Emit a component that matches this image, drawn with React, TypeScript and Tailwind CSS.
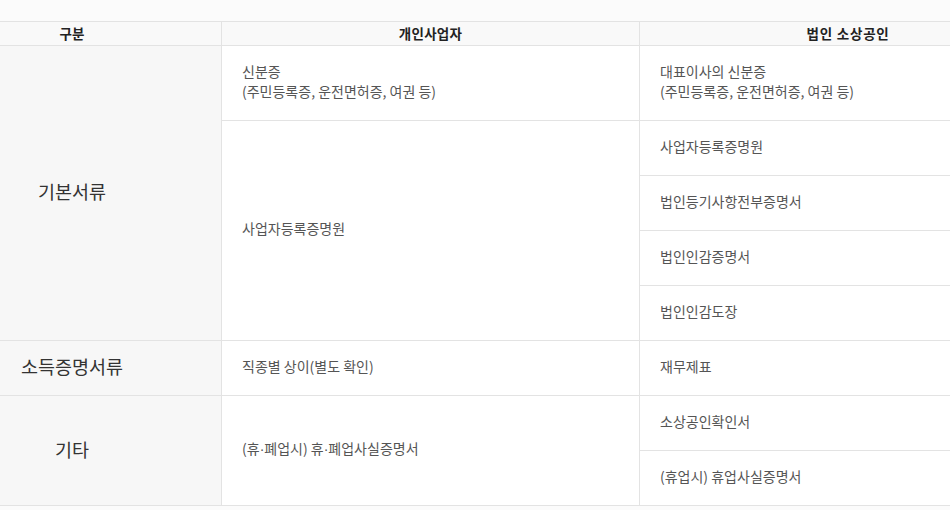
const font = { fontFamily: '"Noto Sans CJK KR", "Noto Sans", sans-serif' };

function Label({ text, span }: { text: string; span: string }) {
  return (
    <div
      className={`${span} flex items-center justify-center border-r border-b border-[#e3e3e3] bg-[#f7f7f7] pb-[2px] text-[18.5px] text-[#333]`}
    >
      {text}
    </div>
  );
}

function Cell({
  children,
  span = "",
  last = false,
}: {
  children: React.ReactNode;
  span?: string;
  last?: boolean;
}) {
  return (
    <div
      className={`${span} flex items-center border-b border-[#e3e3e3] bg-white pb-[5px] pl-5 text-[14px] leading-[20px] text-[#555] ${
        last ? "" : "border-r"
      }`}
    >
      <div>{children}</div>
    </div>
  );
}

// narrow middle dot (the CJK font draws it full width)
const Dot = () => <span className="font-['Liberation_Sans']">·</span>;

export default function App() {
  return (
    <div
      className="h-[510px] w-[950px] overflow-hidden bg-[#fbfbfb] pt-[21px]"
      style={font}
    >
      <div className="ml-[-77px] grid w-[1133px] grid-cols-[299px_418px_416px] grid-rows-[24px_75px_55px_55px_55px_55px_55px_55px_55px] border-t border-[#e3e3e3]">
        {/* header */}
        <div className="flex items-center justify-center border-r border-b border-[#e3e3e3] bg-[#f9f9f9] text-[13.5px] font-bold text-[#222]">
          구분
        </div>
        <div className="flex items-center justify-center border-r border-b border-[#e3e3e3] bg-[#f9f9f9] text-[13.5px] font-bold tracking-[0.3px] text-[#222]">
          개인사업자
        </div>
        <div className="flex items-center justify-center border-b border-[#e3e3e3] bg-[#f9f9f9] text-[13.5px] font-bold tracking-[0.8px] text-[#222]">
          법인 소상공인
        </div>

        {/* 기본서류 */}
        <Label text="기본서류" span="row-span-5" />
        <Cell>
          신분증
          <br />
          (주민등록증, 운전면허증, 여권 등)
        </Cell>
        <Cell last>
          대표이사의 신분증
          <br />
          (주민등록증, 운전면허증, 여권 등)
        </Cell>
        <Cell span="row-span-4">사업자등록증명원</Cell>
        <Cell last>사업자등록증명원</Cell>
        <Cell last>법인등기사항전부증명서</Cell>
        <Cell last>법인인감증명서</Cell>
        <Cell last>법인인감도장</Cell>

        {/* 소득증명서류 */}
        <Label text="소득증명서류" span="" />
        <Cell>직종별 상이(별도 확인)</Cell>
        <Cell last>재무제표</Cell>

        {/* 기타 */}
        <Label text="기타" span="row-span-2" />
        <Cell span="row-span-2">
          (휴<Dot />폐업시) 휴<Dot />폐업사실증명서
        </Cell>
        <Cell last>소상공인확인서</Cell>
        <Cell last>(휴업시) 휴업사실증명서</Cell>
      </div>
    </div>
  );
}
